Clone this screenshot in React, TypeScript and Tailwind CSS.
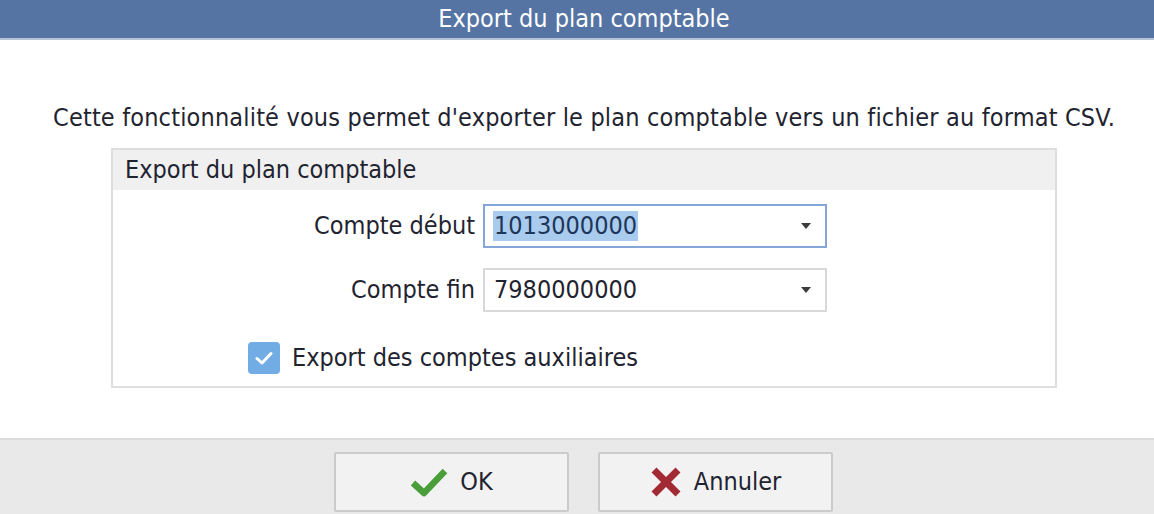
import React from "react";

const FONT = "font-['DejaVu_Sans_Condensed','DejaVu_Sans',sans-serif]";

export default function App() {
  return (
    <div className={`w-[1154px] h-[514px] overflow-hidden bg-white flex flex-col text-[#1f2430] ${FONT}`}>
      {/* title bar */}
      <div className="h-[40px] flex flex-col shrink-0">
        <div className="h-[38px] bg-[#5574a3] flex items-center justify-center pl-[14px] text-white text-[25px]">
          Export du plan comptable
        </div>
        <div className="h-[2px] bg-[#b7c4d8]" />
      </div>

      {/* body */}
      <div className="h-[398px] flex flex-col">
        <div className="h-[108px] pl-[53px] pt-[62px] text-[25px] leading-[32px] tracking-[0.17px] whitespace-nowrap">
          Cette fonctionnalité vous permet d'exporter le plan comptable vers un fichier au format CSV.
        </div>

        <div className="ml-[111px] w-[946px] h-[240px] border-2 border-[#dedede] flex flex-col">
          <div className="h-[40px] bg-[#f0f0f0] pl-[12px] flex items-center text-[25px]">
            Export du plan comptable
          </div>

          <div className="flex flex-col pt-[14px] gap-[20px]">
            <Row label="Compte début" value="1013000000" focused />
            <Row label="Compte fin" value="7980000000" />
          </div>

          <div className="flex items-center mt-[27px] pl-[135px] gap-[12px]">
            <div className="w-[32px] h-[32px] rounded-[4px] bg-[#72ace4] flex items-center justify-center">
              <svg width="18" height="14" viewBox="0 0 18 14">
                <path d="M2 7.5 L7 12 L16 2.5" fill="none" stroke="white" strokeWidth="3" strokeLinecap="round" strokeLinejoin="round" />
              </svg>
            </div>
            <span className="text-[25px]">Export des comptes auxiliaires</span>
          </div>
        </div>
      </div>

      {/* footer */}
      <div className="flex-1 bg-[#e9e9e9] border-t-2 border-[#dcdcdc] flex pl-[334px] pt-[12px] gap-[29px]">
        <Button label="OK" icon={<CheckIcon />} />
        <Button label="Annuler" icon={<CrossIcon />} />
      </div>
    </div>
  );
}

function Row({ label, value, focused }: { label: string; value: string; focused?: boolean }) {
  return (
    <div className="flex items-center">
      <div className="w-[370px] text-right pr-[8px] text-[25px]">{label}</div>
      <div
        className={`w-[344px] h-[44px] border-2 bg-white flex items-center pl-[8px] pr-[14px] ${
          focused ? "border-[#86a6d8]" : "border-[#d9d9d9]"
        }`}
      >
        <span
          className={`text-[25px] leading-[30px] px-[1px] ${focused ? "bg-[#a9cbee] text-[#1d3659]" : ""}`}
        >
          {value}
        </span>
        <span className="ml-auto w-0 h-0 border-l-[5px] border-r-[5px] border-t-[6px] border-l-transparent border-r-transparent border-t-[#3c3c3c]" />
      </div>
    </div>
  );
}

function Button({ label, icon }: { label: string; icon: React.ReactNode }) {
  return (
    <div className="w-[235px] h-[60px] bg-[#f2f2f2] border-2 border-[#cbcbcb] rounded-[2px] flex items-center justify-center gap-[12px] text-[25px]">
      {icon}
      <span>{label}</span>
    </div>
  );
}

function CheckIcon() {
  return (
    <svg width="38" height="30" viewBox="0 0 38 30">
      <path d="M3 16 L14 26 L35 4" fill="none" stroke="#4a9e3a" strokeWidth="6.5" strokeLinejoin="round" />
    </svg>
  );
}

function CrossIcon() {
  return (
    <svg width="32" height="30" viewBox="0 0 32 30">
      <path d="M4 3 L28 27 M28 3 L4 27" fill="none" stroke="#a22a35" strokeWidth="7" />
    </svg>
  );
}
